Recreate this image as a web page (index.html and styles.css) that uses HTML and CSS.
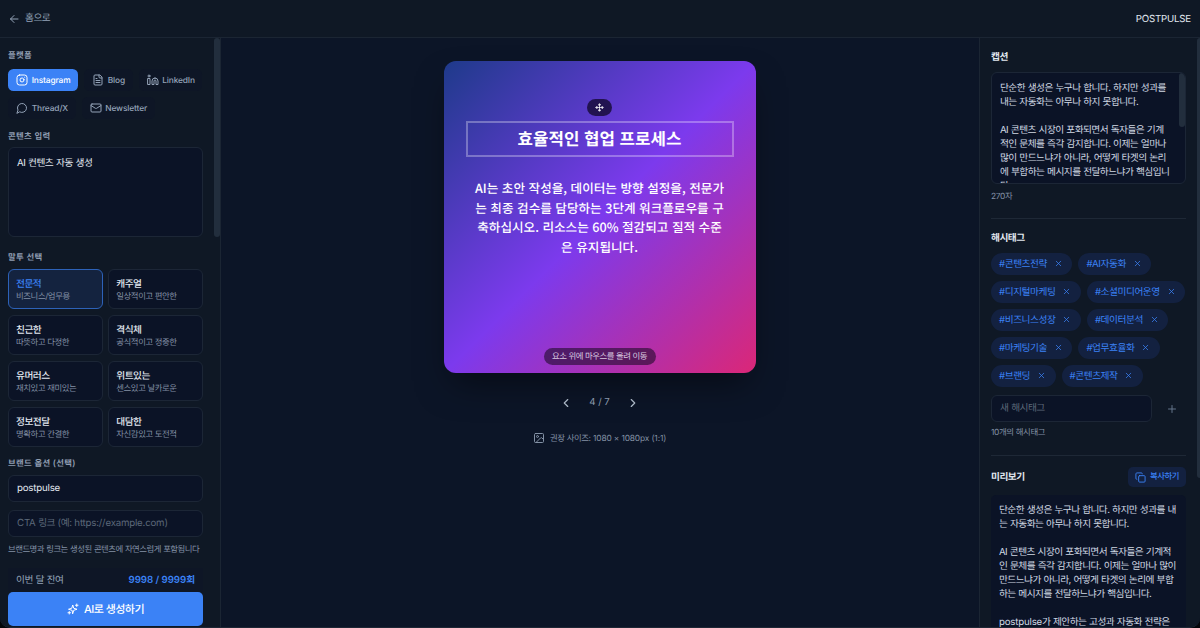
FILE: index.html
```html
<!DOCTYPE html>
<html lang="ko">
<head>
<meta charset="utf-8">
<title>POSTPULSE</title>
<link rel="stylesheet" href="styles.css">
</head>
<body>
<div class="app">
  <header class="topbar">
    <a class="back"><svg class="ico" width="12" height="12" viewBox="0 0 24 24"><path d="M20 12H5M12 19l-7-7 7-7"/></svg><span class="ko">홈으로</span></a>
    <span class="brand">POSTPULSE</span>
  </header>
  <div class="columns">
    <aside class="left">
      <div class="form">
        <h3 class="label">플랫폼</h3>
        <div class="platforms">
          <div class="platform active"><svg class="ico" width="12" height="12" viewBox="0 0 24 24"><rect x="2" y="2" width="20" height="20" rx="5"/><path d="M16 11.37A4 4 0 1 1 12.63 8 4 4 0 0 1 16 11.37zM17.5 6.5h.01"/></svg><span>Instagram</span></div>
          <div class="platform"><svg class="ico" width="12" height="12" viewBox="0 0 24 24"><path d="M15 2H6a2 2 0 0 0-2 2v16a2 2 0 0 0 2 2h12a2 2 0 0 0 2-2V7zM14 2v4a2 2 0 0 0 2 2h4M10 9H8M16 13H8M16 17H8"/></svg><span>Blog</span></div>
          <div class="platform"><svg class="ico" width="12" height="12" viewBox="0 0 24 24"><path d="M16 8a6 6 0 0 1 6 6v7h-4v-7a2 2 0 0 0-4 0v7h-4v-7a6 6 0 0 1 6-6z"/><rect x="2" y="9" width="4" height="12"/><circle cx="4" cy="4" r="2"/></svg><span>LinkedIn</span></div>
          <div class="platform"><svg class="ico" width="12" height="12" viewBox="0 0 24 24"><path d="M7.9 20A9 9 0 1 0 4 16.1L2 22Z"/></svg><span>Thread/X</span></div>
          <div class="platform"><svg class="ico" width="12" height="12" viewBox="0 0 24 24"><rect x="2" y="4" width="20" height="16" rx="2"/><path d="m22 7-8.97 5.7a1.94 1.94 0 0 1-2.06 0L2 7"/></svg><span>Newsletter</span></div>
        </div>
        <h3 class="label">콘텐츠 입력</h3>
        <div class="textarea ko">AI 컨텐츠 자동 생성</div>
        <h3 class="label">말투 선택</h3>
        <div class="tones">
          <div class="tone selected"><b>전문적</b><span>비즈니스/업무용</span></div>
          <div class="tone"><b>캐주얼</b><span>일상적이고 편안한</span></div>
          <div class="tone"><b>친근한</b><span>따뜻하고 다정한</span></div>
          <div class="tone"><b>격식체</b><span>공식적이고 정중한</span></div>
          <div class="tone"><b>유머러스</b><span>재치있고 재미있는</span></div>
          <div class="tone"><b>위트있는</b><span>센스있고 날카로운</span></div>
          <div class="tone"><b>정보전달</b><span>명확하고 간결한</span></div>
          <div class="tone"><b>대담한</b><span>자신감있고 도전적</span></div>
        </div>
        <h3 class="label brand-label">브랜드 옵션 (선택)</h3>
        <div class="input">postpulse</div>
        <div class="input placeholder"><span>CTA <span class="ko">링크</span> (<span class="ko">예</span>: https://example.com)</span></div>
        <p class="help">브랜드명과 링크는 생성된 콘텐츠에 자연스럽게 포함됩니다</p>
        <div class="usage"><span class="ko">이번 달 잔여</span><strong>9998 / 9999회</strong></div>
        <div class="generate"><svg class="ico" width="12" height="12" viewBox="0 0 24 24"><path d="M9.500 14.500 3 12.500l6.500-2L11.500 4l2 6.500 6.500 2-6.500 2-2 6.500zM19.500 2v5M22 4.500h-5M4.500 17v5M7 19.500H2"/></svg><span>AI로 생성하기</span></div>
      </div>
      <div class="track"><div class="thumb"></div></div>
    </aside>
    <main class="stage">
      <div class="slide">
        <div class="mover"><svg class="ico" width="9" height="9" viewBox="0 0 24 24"><path d="M12 3v18M3 12h18M9.500 4.500 12 2l2.500 2.500zM9.500 19.500 12 22l2.500-2.500zM4.500 9.500 2 12l2.500 2.500zM19.500 9.500 22 12l-2.500 2.500z"/></svg></div>
        <h1 class="slide-title">효율적인 협업 프로세스</h1>
        <p class="slide-body">AI는 초안 작성을, 데이터는 방향 설정을, 전문가<br>는 최종 검수를 담당하는 3단계 워크플로우를 구<br>축하십시오. 리소스는 60% 절감되고 질적 수준<br>은 유지됩니다.</p>
        <div class="hint">요소 위에 마우스를 올려 이동</div>
      </div>
      <div class="pager">
        <svg class="ico" width="14" height="14" viewBox="0 0 24 24"><path d="m15 18-6-6 6-6"/></svg>
        <span>4 / 7</span>
        <svg class="ico" width="14" height="14" viewBox="0 0 24 24"><path d="m9 18 6-6-6-6"/></svg>
      </div>
      <div class="size"><svg class="ico" width="12" height="12" viewBox="0 0 24 24"><rect x="3" y="3" width="18" height="18" rx="2"/><circle cx="9" cy="9" r="2"/><path d="M21 15l-3.100-3.100a2 2 0 0 0-2.800 0L6 21"/></svg><span><span class="ko-small">권장 사이즈</span>: 1080 × 1080px (1:1)</span></div>
    </main>
    <aside class="right">
      <section class="caption">
        <h2 class="heading">캡션</h2>
        <div class="caption-box">
          <p class="copy">단순한 생성은 누구나 합니다. 하지만 성과를<br>내는 자동화는 아무나 하지 못합니다.<br><br>AI 콘텐츠 시장이 포화되면서 독자들은 기계<br>적인 문체를 즉각 감지합니다. 이제는 얼마나<br>많이 만드느냐가 아니라, 어떻게 타겟의 논리<br>에 부합하는 메시지를 전달하느냐가 핵심입니<br>다.</p>
          <div class="caption-thumb"></div>
        </div>
        <div class="count">270자</div>
      </section>
      <section class="hashtags">
        <h2 class="heading">해시태그</h2>
        <div class="tags">
          <span class="tag"><span>#콘텐츠전략</span><svg class="ico" width="9" height="9" viewBox="0 0 24 24"><path d="M18 6 6 18M6 6l12 12"/></svg></span>
          <span class="tag"><span>#AI자동화</span><svg class="ico" width="9" height="9" viewBox="0 0 24 24"><path d="M18 6 6 18M6 6l12 12"/></svg></span>
          <span class="tag"><span>#디지털마케팅</span><svg class="ico" width="9" height="9" viewBox="0 0 24 24"><path d="M18 6 6 18M6 6l12 12"/></svg></span>
          <span class="tag"><span>#소셜미디어운영</span><svg class="ico" width="9" height="9" viewBox="0 0 24 24"><path d="M18 6 6 18M6 6l12 12"/></svg></span>
          <span class="tag"><span>#비즈니스성장</span><svg class="ico" width="9" height="9" viewBox="0 0 24 24"><path d="M18 6 6 18M6 6l12 12"/></svg></span>
          <span class="tag"><span>#데이터분석</span><svg class="ico" width="9" height="9" viewBox="0 0 24 24"><path d="M18 6 6 18M6 6l12 12"/></svg></span>
          <span class="tag"><span>#마케팅기술</span><svg class="ico" width="9" height="9" viewBox="0 0 24 24"><path d="M18 6 6 18M6 6l12 12"/></svg></span>
          <span class="tag"><span>#업무효율화</span><svg class="ico" width="9" height="9" viewBox="0 0 24 24"><path d="M18 6 6 18M6 6l12 12"/></svg></span>
          <span class="tag"><span>#브랜딩</span><svg class="ico" width="9" height="9" viewBox="0 0 24 24"><path d="M18 6 6 18M6 6l12 12"/></svg></span>
          <span class="tag"><span>#콘텐츠제작</span><svg class="ico" width="9" height="9" viewBox="0 0 24 24"><path d="M18 6 6 18M6 6l12 12"/></svg></span>
        </div>
        <div class="add"><div class="input placeholder ko">새 해시태그</div><svg class="ico" width="12" height="12" viewBox="0 0 24 24"><path d="M5 12h14M12 5v14"/></svg></div>
        <div class="count">10개의 해시태그</div>
      </section>
      <section class="preview">
        <div class="preview-head">
          <h2 class="heading">미리보기</h2>
          <div class="copy-btn"><svg class="ico" width="11" height="11" viewBox="0 0 24 24"><rect x="8" y="8" width="14" height="14" rx="2"/><path d="M4 16c-1.100 0-2-.9-2-2V4c0-1.100.9-2 2-2h10c1.100 0 2 .9 2 2"/></svg><span>복사하기</span></div>
        </div>
        <p class="copy preview-box">단순한 생성은 누구나 합니다. 하지만 성과를 내<br>는 자동화는 아무나 하지 못합니다.<br><br>AI 콘텐츠 시장이 포화되면서 독자들은 기계적<br>인 문체를 즉각 감지합니다. 이제는 얼마나 많이<br>만드느냐가 아니라, 어떻게 타겟의 논리에 부합<br>하는 메시지를 전달하느냐가 핵심입니다.<br><br><span class="latin">postpulse</span>가 제안하는 고성과 자동화 전략은</p>
      </section>
      <div class="page-thumb"></div>
    </aside>
  </div>
</div>
</body>
</html>
```
FILE: styles.css
```css
* { box-sizing: border-box; margin: 0; padding: 0; }
html { background: #030509; }
body { width: 1200px; height: 628px; overflow: hidden; font: 9.7px/14px Inter, "Noto Sans CJK KR", sans-serif; color: #e2e8f0; text-rendering: geometricPrecision; }
.app { display: flex; flex-direction: column; width: 1200px; height: 628px; background: #0c1527; border-radius: 0 0 10px 10px; overflow: hidden; white-space: nowrap; border-bottom: 1px solid #1e2735; }
.ico { flex: none; fill: none; stroke: currentColor; stroke-width: 2; stroke-linecap: round; stroke-linejoin: round; }
.ko { letter-spacing: -.5px; word-spacing: .5px; }
.ko-small { letter-spacing: -.45px; word-spacing: .4px; }

.topbar { flex: none; display: flex; justify-content: space-between; align-items: center; height: 38px; padding: 1px 9px 0 8px; background: #0f1825; border-bottom: 1px solid #1b2533; }
.back { display: flex; align-items: center; gap: 5px; color: #94a3b8; }
.back .ico { margin-top: -1px; }
.brand { color: #e2e8f0; letter-spacing: -.2px; padding-top: 1px; }
.columns { flex: 1; min-height: 0; display: grid; grid-template-columns: 221px 758px 221px; }

.left { display: flex; justify-content: space-between; min-height: 0; background: #0f1825; border-right: 1px solid #1b2533; }
.form { width: 195px; margin-left: 8px; padding-top: 12px; }
.track { width: 6px; }
.thumb { height: 199px; background: #222e3d; border-radius: 3px; }
.label { font-size: 8.4px; line-height: 12px; font-weight: 600; color: #8f9db1; letter-spacing: .3px; }
.platforms { display: flex; flex-wrap: wrap; gap: 6px; margin: 7px -5px 11.500px 0; }
.platform { display: flex; align-items: center; gap: 4px; height: 22px; padding: 1px 7.500px 0 8px; font-size: 8.4px; letter-spacing: -.14px; color: #94a3b8; border-radius: 5.500px; background: #0e1626; font-weight: 500; }
.platform .ico { margin: -1px -.3px 0 0; }
.platform.active { background: #3b82f6; color: #fff; }
.textarea { height: 90px; margin: 4.500px 0 15px; padding: 8.500px 8px; background: #0b1326; border: 1px solid #1c2636; border-radius: 6px; }
.tones { display: grid; grid-template-columns: 1fr 1fr; gap: 5.500px; margin: 4.500px 0 11px; }
.tone { height: 40.500px; padding: 8.500px 7px 0; background: #0b1326; border: 1px solid #1c2636; border-radius: 6px; letter-spacing: -.5px; }
.tone b { display: block; font-size: 9.7px; line-height: 13px; font-weight: 500; }
.tone span { display: block; font-size: 8.4px; line-height: 12px; color: #8391a5; letter-spacing: -.4px; }
.tone.selected { background: #14233f; border-color: #2d62b8; }
.tone.selected b { color: #3b82f6; }
.input { display: flex; align-items: center; height: 27px; padding: 1px 8px 0; background: #0b1326; border: 1px solid #1c2636; border-radius: 6px; letter-spacing: -.2px; }
.brand-label + .input { margin: 5px 0 8px; }
.placeholder { color: #5c6879; }
.placeholder.ko { letter-spacing: -.5px; }
.help { margin-top: 7px; font-size: 8.4px; line-height: 12px; color: #8391a5; letter-spacing: -.51px; word-spacing: .4px; }
.usage { display: flex; justify-content: space-between; align-items: center; height: 24px; margin-top: 12px; padding: 1px 8px 0; background: #0e1626; color: #94a3b8; }
.usage strong { font-weight: 600; color: #3b82f6; letter-spacing: -.05px; }
.generate { display: flex; align-items: center; justify-content: center; gap: 5px; height: 34px; margin-top: -.5px; border-radius: 5px; background: #3b82f6; color: #fff; font-size: 11px; font-weight: 500; letter-spacing: -.55px; }

.stage { display: flex; flex-direction: column; align-items: center; padding: 22.500px 1px 0 0; }
.slide { position: relative; width: 312px; height: 312px; padding: 60.500px 22px 0; border-radius: 12px; background: linear-gradient(135deg, #1e3a8a, #7c3aed 50%, #db2777); box-shadow: 0 17px 35px -9px rgba(0,0,0,.5); color: #fff; font-family: "Noto Sans CJK KR", sans-serif; text-align: center; }
.slide-title { height: 36px; border: 2px solid rgba(255,255,255,.3); font-size: 16.800px; line-height: 31.500px; font-weight: 700; }
.slide-body { margin-top: 21px; font-size: 12.600px; line-height: 19.600px; font-weight: 500; }
.mover { position: absolute; left: 143.500px; top: 38.500px; width: 25px; height: 17px; border-radius: 9px; background: rgba(20,10,50,.8); display: flex; align-items: center; justify-content: center; }
.hint { position: absolute; left: 100px; top: 287.500px; width: 112px; height: 16.500px; border-radius: 9px; background: rgba(30,10,40,.6); font-size: 8.4px; line-height: 16px; color: #d9c9e0; letter-spacing: -.42px; }
.pager { display: flex; align-items: center; gap: 16px; margin-top: 22.500px; color: #94a3b8; }
.pager span { padding-top: 1px; }
.pager .ico { color: #b4c0cf; }
.size { display: flex; align-items: center; gap: 5px; margin-top: 20.500px; font-size: 8.4px; color: #8391a5; letter-spacing: -.14px; }
.size > span { padding-top: 1px; }

.right { position: relative; padding: 12px 14px 0 11px; background: #0f1825; border-left: 1px solid #1b2533; overflow: hidden; }
.heading { font-size: 9.7px; line-height: 14px; padding-top: 1px; height: 14px; font-weight: 600; letter-spacing: -.5px; color: #e2e8f0; }
.caption-box { position: relative; height: 112px; margin-top: 8px; padding: 9px 8px; overflow: hidden; border: 1px solid #1c2636; border-radius: 6px; background: #0b1326; }
.copy { font-size: 9.7px; line-height: 13.960px; letter-spacing: -.56px; word-spacing: .5px; color: #d0d8e3; }
.latin { letter-spacing: -.2px; }
.caption-thumb { position: absolute; right: 0; top: 0; width: 6px; height: 54px; border-radius: 3px; background: #222e3d; }
.count { margin-top: 6.500px; font-size: 8.4px; line-height: 12px; color: #8391a5; letter-spacing: -.35px; }
.hashtags { margin-top: 15.500px; padding-top: 12px; border-top: 1px solid #1e2836; }
.tags { display: flex; flex-wrap: wrap; gap: 6px; margin: 8px -2px 8px 0; }
.tag { display: flex; align-items: center; gap: 7px; height: 22px; padding: 0 9.500px 0 8px; border-radius: 11px; background: #132140; color: #3b82f6; font-size: 9.7px; letter-spacing: -.46px; }
.tag span { padding-top: 1px; }
.tag .ico { margin-top: -1px; }
.add { display: flex; align-items: center; gap: 14px; color: #64748b; }
.add .input { width: 161px; }
.hashtags .count { margin-top: 5px; }
.preview { margin-top: 16px; padding-top: 11px; border-top: 1px solid #1e2836; }
.preview-head { display: flex; justify-content: space-between; align-items: center; height: 20px; }
.copy-btn { display: flex; align-items: center; gap: 4px; height: 20px; padding: 0 7px; border-radius: 5px; background: #132140; color: #3b82f6; font-size: 8.4px; letter-spacing: -.48px; font-weight: 500; }
.preview-box { margin-top: 8px; padding: 9px 8px; height: 160px; background: #0b1326; border-radius: 5px; }
.page-thumb { position: absolute; right: 0; top: 0; width: 3px; height: 440px; border-radius: 3px 0 0 3px; background: #222e3d; }
```
